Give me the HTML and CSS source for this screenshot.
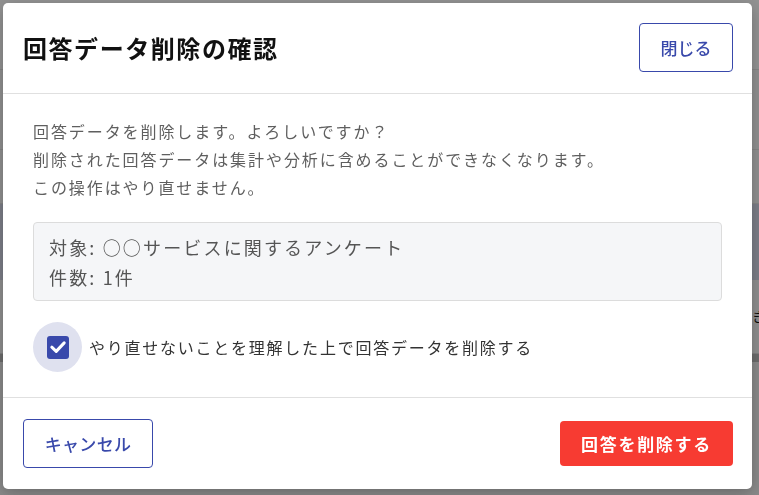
FILE: index.html
```html
<!DOCTYPE html>
<html lang="ja">
<head>
<meta charset="utf-8">
<title>回答データ削除の確認</title>
<link rel="stylesheet" href="styles.css">
</head>
<body>
<div class="page">
  <div class="pg-top"></div>
  <div class="pg-row"></div>
  <div class="pg-row pg-row-b"></div>
  <div class="pg-band"></div>
  <div class="pg-row pg-row-c"><span class="pg-text">き鎌</span></div>
  <div class="pg-dark"></div>
  <div class="pg-rest"></div>
</div>
<div class="overlay">
  <div class="modal" role="dialog" aria-labelledby="dlg-title">
    <header class="modal-header">
      <h1 id="dlg-title" class="modal-title">回答データ削除の確認</h1>
      <button class="btn btn-outline btn-close">閉じる</button>
    </header>
    <section class="modal-body">
      <p class="message">回答データを削除します。よろしいですか？<br>削除された回答データは集計や分析に含めることができなくなります。<br>この操作はやり直せません。</p>
      <div class="info-box">
        <div>対象: ○○サービスに関するアンケート</div>
        <div>件数: 1件</div>
      </div>
      <label class="confirm">
        <span class="check-ripple">
          <span class="check-box">
            <svg width="22" height="22" viewBox="0 0 22 22"><path d="M4.8 11.2 L9.2 15.4 L17.2 6.9" fill="none" stroke="#fff" stroke-width="3" stroke-linecap="round" stroke-linejoin="round"/></svg>
          </span>
        </span>
        <span class="confirm-label">やり直せないことを理解した上で回答データを削除する</span>
      </label>
    </section>
    <footer class="modal-footer">
      <button class="btn btn-outline btn-cancel">キャンセル</button>
      <button class="btn btn-danger">回答を削除する</button>
    </footer>
  </div>
</div>
</body>
</html>
```
FILE: styles.css
```css
* { box-sizing: border-box; }
html, body { margin: 0; padding: 0; }
body {
  width: 759px;
  height: 495px;
  overflow: hidden;
  font-family: "Noto Sans CJK JP", "Noto Sans", sans-serif;
  background: #f4f4f4;
}
.page { display: flex; flex-direction: column; height: 495px; }
.pg-top { height: 70px; background: #f4f4f4; border-bottom: 1px solid #dedede; }
.pg-row { height: 80px; background: #f0f0f0; border-bottom: 1px solid #dedede; }
.pg-row-b { height: 54px; background: #f0f0f0; }
.pg-band { height: 76px; background: #cfd2e2; }
.pg-row-c { height: 74px; background: #eeeeee; border-bottom: 1px solid #d4d4d4; position: relative; }
.pg-text { position: absolute; left: 752px; top: 26px; font-size: 14px; color: #111; white-space: nowrap; }
.pg-dark { height: 8px; background: #b4b4b4; }
.pg-rest { flex: 1; background: #e6e6e6; }

.overlay {
  position: fixed;
  inset: 0;
  background: rgba(0, 0, 0, 0.4);
  padding: 3px 7px 6px 3px;
  display: flex;
}
.modal {
  width: 749px;
  height: 486px;
  background: #fff;
  border-radius: 5px;
  box-shadow: 0 4px 16px rgba(0, 0, 0, 0.25);
  display: flex;
  flex-direction: column;
  overflow: hidden;
}
.modal-header {
  height: 91px;
  flex: none;
  display: flex;
  align-items: center;
  justify-content: space-between;
  padding: 0 19px 1px 20px;
  border-bottom: 1px solid #e0e0e0;
}
.modal-title {
  margin: 0;
  font-size: 24px;
  font-weight: 700;
  letter-spacing: 0.065em;
  color: #111;
}
.btn {
  font-family: inherit;
  border-radius: 4px;
  cursor: pointer;
  display: inline-flex;
  align-items: center;
  justify-content: center;
  padding: 0;
}
.btn-outline {
  background: #fff;
  border: 1px solid #3949ab;
  color: #3949ab;
  font-size: 17px;
  font-weight: 500;
}
.btn-close { width: 94px; height: 49px; margin-bottom: 1px; }
.btn-cancel { width: 130px; height: 49px; letter-spacing: 0.02em; }
.btn-danger {
  width: 173px;
  height: 45px;
  background: #f73b32;
  border: none;
  color: #fff;
  font-size: 17px;
  font-weight: 700;
  letter-spacing: 0.1em;
}
.modal-body {
  flex: 1;
  padding: 23px 30px 0 30px;
  border-bottom: 1px solid #e0e0e0;
}
.message {
  margin: 0;
  font-size: 16px;
  line-height: 28px;
  letter-spacing: 0.12em;
  color: #5f5f5f;
}
.info-box {
  margin-top: 21px;
  background: #f5f6f8;
  border: 1px solid #dcdcdc;
  border-radius: 4px;
  padding: 9px 15px 8px;
  font-size: 18px;
  line-height: 30px;
  letter-spacing: 0.12em;
  color: #555;
}
.confirm {
  margin-top: 21px;
  display: flex;
  align-items: center;
  gap: 7px;
}
.check-ripple {
  width: 49px;
  height: 50px;
  border-radius: 50%;
  background: #dfe1ef;
  display: flex;
  align-items: center;
  justify-content: center;
}
.check-box {
  width: 22px;
  height: 23px;
  border-radius: 3px;
  background: #3949ab;
  display: flex;
  align-items: center;
  justify-content: center;
}
.check-box svg { display: block; }
.confirm-label {
  font-size: 16px;
  letter-spacing: 0.11em;
  color: #333;
}
.modal-footer {
  height: 91px;
  flex: none;
  display: flex;
  align-items: center;
  justify-content: space-between;
  padding: 0 19px 0 20px;
}
```
